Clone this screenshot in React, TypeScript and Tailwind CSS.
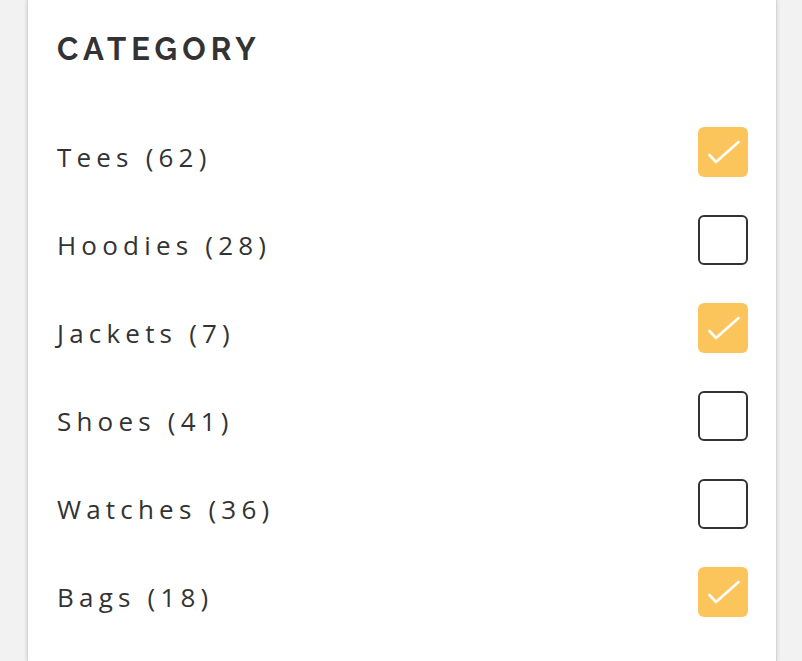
const items = [
  { label: 'Tees', count: 62, checked: true },
  { label: 'Hoodies', count: 28, checked: false },
  { label: 'Jackets', count: 7, checked: true },
  { label: 'Shoes', count: 41, checked: false },
  { label: 'Watches', count: 36, checked: false },
  { label: 'Bags', count: 18, checked: true },
];

function Box({ checked }: { checked: boolean }) {
  if (checked) {
    return (
      <div className="w-[50px] h-[50px] rounded-[6px] bg-[#fcc55b]">
        <svg width="50" height="50" viewBox="0 0 50 50" fill="none">
          <path d="M11.5 28 L18 35 L40.5 15" stroke="white" strokeWidth="2.6" strokeLinecap="round" strokeLinejoin="round" />
        </svg>
      </div>
    );
  }
  return <div className="w-[50px] h-[50px] rounded-[6px] border-2 border-[#333]" />;
}

export default function App() {
  return (
    <div className="h-[661px] bg-[#f2f2f2] overflow-hidden">
      <div className="ml-[27px] w-[750px] h-full bg-white border-x border-[#d6d6d6] shadow-[0_0_4px_rgba(0,0,0,0.15)] pl-[29px] pr-[28px]">
        <h2
          className="pt-[30px] h-[108px] text-[31px] leading-[38px] font-bold tracking-[0.165em] text-[#333]"
          style={{ fontFamily: 'Raleway, Lato, sans-serif' }}
        >
          CATEGORY
        </h2>
        {items.map((it) => (
          <div key={it.label} className="h-[88px] flex items-center justify-between">
            <span
              className="pt-[11px] text-[26px] tracking-[0.2em] text-[#333]"
              style={{ fontFamily: '"Open Sans", sans-serif' }}
            >
              {it.label} ({it.count})
            </span>
            <Box checked={it.checked} />
          </div>
        ))}
      </div>
    </div>
  );
}
